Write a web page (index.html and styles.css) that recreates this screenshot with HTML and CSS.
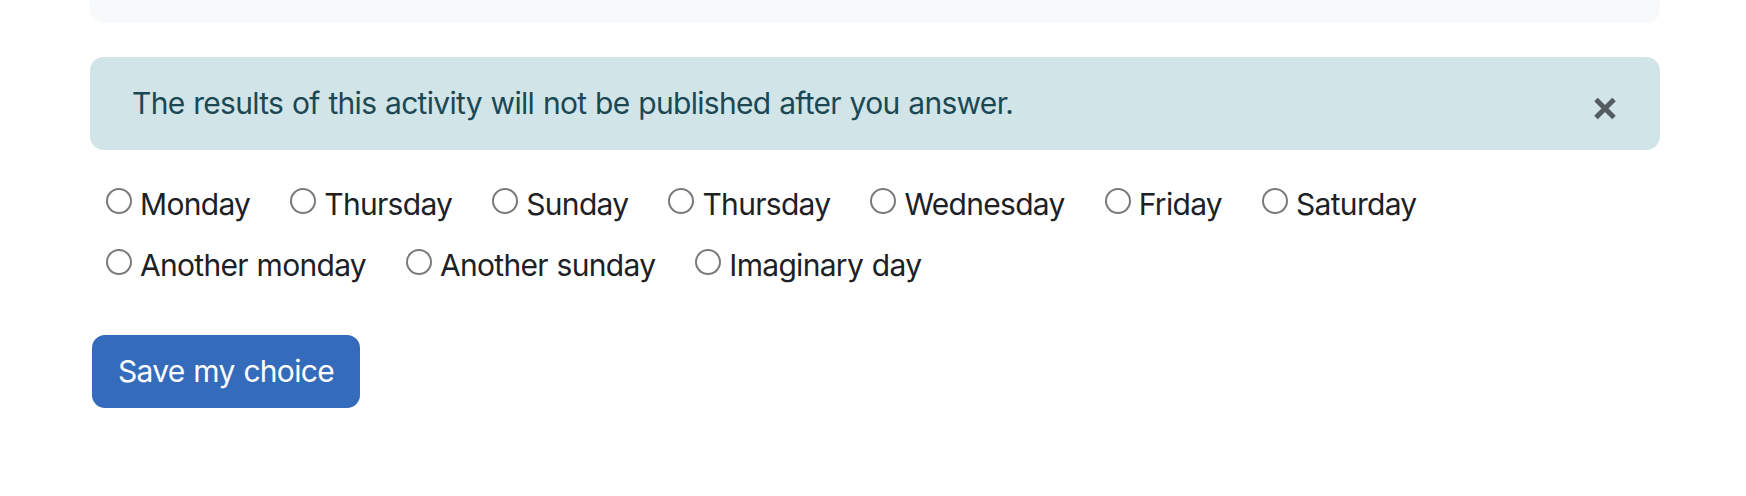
FILE: index.html
```html
<!DOCTYPE html>
<html>
<head>
    <title>Choice</title>
    <link rel="stylesheet" href="styles.css">
</head>
<body>
<div class="page">
    <div class="card-end"></div>

    <div class="alert">
        <span class="alert-text">The results of this activity will not be published after you answer.</span>
        <button type="button" class="close" aria-label="Close">
            <svg width="24" height="23" viewBox="0 0 24 23">
                <path d="M3 2.5 L21 20.5 M21 2.5 L3 20.5" stroke="#535c5f" stroke-width="5" fill="none"/>
            </svg>
        </button>
    </div>

    <form class="choice-form">
        <ul class="choices">
            <li class="option"><label><input type="radio" name="answer" value="1"><span>Monday</span></label></li>
            <li class="option"><label><input type="radio" name="answer" value="2"><span>Thursday</span></label></li>
            <li class="option"><label><input type="radio" name="answer" value="3"><span>Sunday</span></label></li>
            <li class="option"><label><input type="radio" name="answer" value="4"><span>Thursday</span></label></li>
            <li class="option"><label><input type="radio" name="answer" value="5"><span>Wednesday</span></label></li>
            <li class="option"><label><input type="radio" name="answer" value="6"><span>Friday</span></label></li>
            <li class="option"><label><input type="radio" name="answer" value="7"><span>Saturday</span></label></li>
            <li class="option"><label><input type="radio" name="answer" value="8"><span>Another monday</span></label></li>
            <li class="option"><label><input type="radio" name="answer" value="9"><span>Another sunday</span></label></li>
            <li class="option"><label><input type="radio" name="answer" value="10"><span>Imaginary day</span></label></li>
        </ul>
        <button type="submit" class="btn-primary">Save my choice</button>
    </form>
</div>
</body>
</html>
```

FILE: styles.css
```css
body {
    margin: 0;
    padding: 0;
    background-color: #fff;
    font-family: Inter, "Noto Sans", sans-serif;
    font-size: 30px;
    line-height: 45px;
    letter-spacing: -0.7px;
    word-spacing: 1px;
    color: #1d2125;
}
.page {
    width: 1570px;
    margin-left: 90px;
}
.card-end {
    height: 23px;
    background-color: #f8f9fa;
    border-radius: 0 0 14px 14px;
}
.alert {
    display: flex;
    justify-content: space-between;
    align-items: flex-start;
    margin-top: 34px;
    padding: 24px 40px 24px 42px;
    background-color: #d1e4e8;
    color: #1b4853;
    border-radius: 14px;
}
.close {
    background: none;
    border: none;
    padding: 0;
    margin-top: 16px;
    margin-right: 3px;
    cursor: pointer;
    display: flex;
}
.choice-form {
    margin-top: 32px;
}
.choices {
    list-style: none;
    margin: 0;
    padding: 0 0 0 16px;
    display: flex;
    flex-wrap: wrap;
    column-gap: 40px;
    row-gap: 16px;
    width: 1450px;
}
.option label {
    display: flex;
    align-items: flex-start;
    cursor: pointer;
}
.option input {
    appearance: none;
    width: 26px;
    height: 26px;
    margin: 6px 8px 0 0;
    border: 2px solid #7a7a7a;
    border-radius: 50%;
    background-color: #fff;
    box-sizing: border-box;
    flex-shrink: 0;
}
.btn-primary {
    margin-top: 47px;
    margin-left: 2px;
    padding: 12px 24px;
    font-family: inherit;
    font-size: 30px;
    line-height: 45px;
    letter-spacing: -0.7px;
    word-spacing: 1px;
    color: #fff;
    background-color: #346bbb;
    border: 2px solid #346bbb;
    border-radius: 13px;
    cursor: pointer;
}
```
